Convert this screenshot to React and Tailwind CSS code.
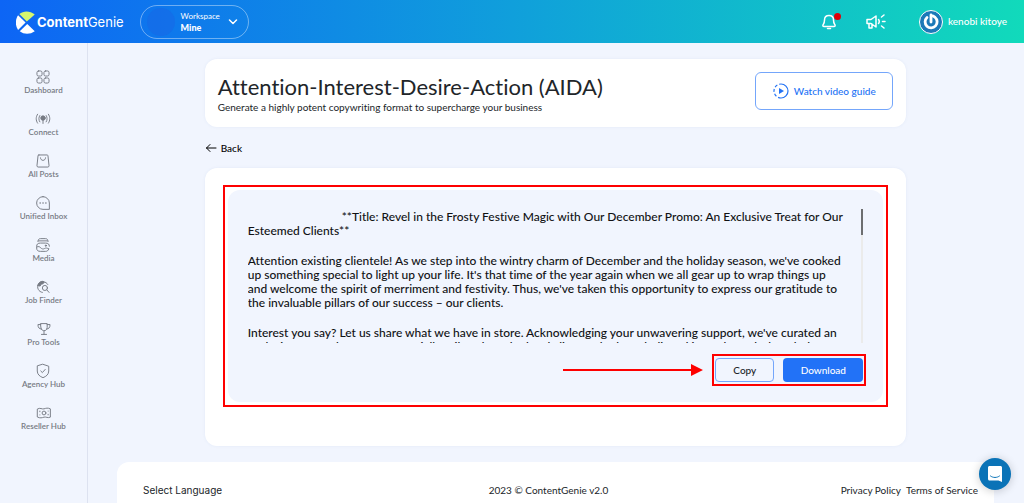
import React from 'react';

const stroke = { fill: 'none', stroke: 'currentColor', strokeWidth: 1.5, strokeLinecap: 'round', strokeLinejoin: 'round' };

const NAV_ITEMS = [
    {
        label: 'Dashboard',
        icon: (
            <g {...stroke}>
                <rect x="1.500" y="1.500" width="8" height="8" rx="2.500" />
                <rect x="12.500" y="1.500" width="8" height="8" rx="2.500" />
                <rect x="1.500" y="12.500" width="8" height="8" rx="2.500" />
                <rect x="12.500" y="12.500" width="8" height="8" rx="2.500" />
            </g>
        ),
    },
    {
        label: 'Connect',
        icon: (
            <g {...stroke}>
                <circle cx="11" cy="9.500" r="3.500" fill="currentColor" />
                <path d="M11 12v6M6 5.500c-2 3-2 7 0 10M16 5.500c2 3 2 7 0 10M2.500 3.500c-3 4.500-3 9.500 0 14M19.500 3.500c3 4.500 3 9.500 0 14" />
            </g>
        ),
    },
    {
        label: 'All Posts',
        icon: (
            <g {...stroke}>
                <path d="M4.500 1.500h13c.8 0 1.200.5 1.300 1.200l1.700 15.800c0 1.200-.8 2-1.800 2H3.300c-1 0-1.800-.8-1.800-2L3.200 2.700c.1-.7.5-1.200 1.300-1.200z" />
                <path d="M7 6c0 5.500 8 5.500 8 0" />
            </g>
        ),
    },
    {
        label: 'Unified Inbox',
        icon: (
            <g {...stroke}>
                <path d="M11 1a10 10 0 0 1 10 10v10H11a10 10 0 0 1 0-20z" />
                <path d="M6.500 11h.1M11 11h.1M15.500 11h.1" strokeWidth="2.4" />
            </g>
        ),
    },
    {
        label: 'Media',
        icon: (
            <g {...stroke}>
                <path d="M3 5.500c.3-3 1.500-4.500 4-4.500h8c2.500 0 3.700 1.500 4 4.500M4 4.500h14" />
                <path d="M20 17.500c-1 2.500-2.500 3.500-5 3.500H7c-4 0-6-1.500-6-5.500v-2C1 9.500 3 8 7 8h8c4 0 6 1.500 6 5" />
                <path d="M1.500 14c3-1.500 4.500 0 6 1.500s3.500 2.500 6 1 4-.5 6.500.5" />
                <circle cx="15.500" cy="12" r="1" fill="currentColor" />
            </g>
        ),
    },
    {
        label: 'Job Finder',
        icon: (
            <g {...stroke}>
                <path d="M18.500 7A8.500 8.500 0 1 0 10 19.500" />
                <path d="M3 8c1-4 4-6 8-6l2 1.500-2 2.500-3 .5-1.500 3L3 9z" fill="currentColor" />
                <circle cx="14" cy="12.500" r="4" />
                <path d="M17 15.500l3.500 4" />
            </g>
        ),
    },
    {
        label: 'Pro Tools',
        icon: (
            <g {...stroke}>
                <path d="M6 2.500h10v6c0 7-10 7-10 0zM6 4H1.500c0 5 2 7 5.500 7M16 4h4.500c0 5-2 7-5.500 7M11 14v5M7 19.500h8" />
            </g>
        ),
    },
    {
        label: 'Agency Hub',
        icon: (
            <g {...stroke}>
                <path d="M11 .5l9 3v7.500c0 5.500-4 8.500-9 10.500-5-2-9-5-9-10.500V3.500z" />
                <path d="M7.500 11l2.500 2.500 4.500-5" />
            </g>
        ),
    },
    {
        label: 'Reseller Hub',
        icon: (
            <g {...stroke}>
                <path d="M1 4.500c4-2.500 7 1 10 0s6-2 10 0v13c-4 2-7-1-10 0s-6 2-10 0z" />
                <circle cx="11" cy="11" r="3" />
                <path d="M4.500 8v1M17.500 13v1M4.500 14h.1M17.500 8h.1" />
            </g>
        ),
    },
];

const Logo = () => (
    <a href="#" className="flex items-center gap-px text-white">
        <svg viewBox="0 0 24 28" className="h-7 w-5" aria-hidden="true">
            <path d="M4 4.500C9 0 17 .3 22.500 5L13 13.500z" fill="#d5f76e" />
            <path d="M2.500 6L11.500 14.500l-9 9C-1 18.500-1 11 2.500 6z" fill="#fff" />
            <path d="M4.500 25L13.500 16.500l9 8.500c-5.500 4-13 4-18 0z" fill="#fff" />
        </svg>
        <span className="font-[Inter,sans-serif] text-[13px] leading-5"><b className="font-bold">Content</b>Genie</span>
    </a>
);

const Header = () => (
    <header className="flex h-[43px] shrink-0 items-center bg-linear-to-r/srgb from-[#0d65f5] via-[#109fdb] to-[#11dabb] pr-[17px] pl-4 text-white">
        <Logo />
        <button className="ml-4 flex h-[34px] w-[109px] items-center rounded-full border border-white/40 pr-2.5 pl-1.5 text-left">
            <span className="size-7 rounded-full bg-[#1866e6]/50" />
            <span className="ml-1.5 flex flex-col text-[8px] leading-[11px]">
                <span>Workspace</span>
                <b className="text-[9px] font-black">Mine</b>
            </span>
            <svg viewBox="0 0 10 6" className="ml-auto h-1.5 w-2.5" {...stroke}><path d="M1.500 1L5 4.500 8.500 1" /></svg>
        </button>
        <div className="ml-auto flex items-center">
            <button aria-label="Notifications" className="relative">
                <svg viewBox="0 0 16 16" className="size-4" {...stroke}>
                    <path d="M8 1.500c-3 0-4.500 2-4.500 4.500 0 3-1 4-1.500 5-.4 1 0 1.500 1 1.500h10c1 0 1.400-.5 1-1.500-.5-1-1.500-2-1.500-5 0-2.500-1.500-4.500-4.500-4.500z" />
                    <path d="M6.500 14.500h3" />
                </svg>
                <span className="absolute -top-px -right-1 size-[7px] rounded-full bg-[#e00008]" />
            </button>
            <button aria-label="Announcements" className="ml-7">
                <svg viewBox="0 0 22 18" className="h-[18px] w-[22px]" {...stroke}>
                    <path d="M2 6.500h4l5-3.500v11l-5-3.500H2zM4 10.500V15h3v-4M13.500 6.500c1 1 1 3 0 4M16.500 4l2.500-2M17.500 8.500H20M16.500 13l2.500 2" />
                </svg>
            </button>
            <a href="#" className="ml-8 flex items-center gap-[5px] text-[10px] font-medium">
                <svg viewBox="0 0 24 24" className="size-6" aria-hidden="true">
                    <circle cx="12" cy="12" r="11.500" fill="#1b79b8" stroke="#fff" />
                    <path d="M12 5v7M8 7.500a6 6 0 1 0 8-.2M12 5.700c1.500 0 3 .6 4 1.600" fill="none" stroke="#fff" strokeWidth="2.800" strokeLinecap="round" />
                </svg>
                kenobi kitoye
            </a>
        </div>
    </header>
);

const Sidebar = () => (
    <nav className="flex w-[88px] shrink-0 flex-col items-center gap-4 border-r border-[#dde2f0] pt-[27px] text-[#777b84]">
        {NAV_ITEMS.map(item => (
            <a key={item.label} href="#" className="flex flex-col items-center text-[8px] leading-3 font-semibold">
                <svg viewBox="0 0 22 22" className="size-3.5 overflow-visible" aria-hidden="true">{item.icon}</svg>
                {item.label}
            </a>
        ))}
    </nav>
);

const PageTitle = () => (
    <section className="flex items-start justify-between rounded-xl bg-white pt-[13px] pr-[13px] pb-3.5 pl-[13px] shadow-[0_0_3px_rgba(120,150,200,0.12)]">
        <div className="pt-px">
            <h1 className="text-[22px] leading-7">Attention-Interest-Desire-Action (AIDA)</h1>
            <p className="text-[10px] leading-3">Generate a highly potent copywriting format to supercharge your business</p>
        </div>
        <button className="flex h-[38px] w-[138px] items-center justify-center gap-[5px] rounded-md border border-[#74a6fb] text-[10px] font-medium text-[#2272f5]">
            <svg viewBox="0 0 16 16" className="size-4" aria-hidden="true">
                <path d="M8 1a7 7 0 0 1 0 14" fill="none" stroke="currentColor" strokeWidth="1.200" />
                <path d="M8 15A7 7 0 0 1 8 1" fill="none" stroke="currentColor" strokeWidth="1.200" strokeDasharray="3 2" />
                <path d="M6 5l5 3-5 3z" fill="currentColor" />
            </svg>
            Watch video guide
        </button>
    </section>
);

const Result = () => (
    <section className="rounded-xl bg-white px-[18px] pt-[17px] pb-[39px] shadow-[0_0_3px_rgba(120,150,200,0.12)]">
        <div className="border-2 border-[#fe0000] p-[3px]">
            <div className="rounded-xl bg-[#f1f5fe] px-5 pt-[19px] pb-4">
                <div className="flex h-[134px] justify-between overflow-hidden">
                    <div className="flex flex-col gap-4 pt-px text-[12px] leading-[14px] font-medium whitespace-pre text-[#101214]">
                        <p>
                            <span className="inline-block w-[94px]" />**Title: Revel in the Frosty Festive Magic with Our December Promo: An Exclusive Treat for Our<br />
                            Esteemed Clients**
                        </p>
                        <p>
                            Attention existing clientele! As we step into the wintry charm of December and the holiday season, we've cooked<br />
                            up something special to light up your life. It's that time of the year again when we all gear up to wrap things up<br />
                            and welcome the spirit of merriment and festivity. Thus, we've taken this opportunity to express our gratitude to<br />
                            the invaluable pillars of our success – our clients.
                        </p>
                        <p>
                            Interest you say? Let us share what we have in store. Acknowledging your unwavering support, we've curated an<br />
                            exclusive December promo, specially tailored for the loyal clients who have believed in us through the whole
                        </p>
                    </div>
                    <div className="w-0.5 shrink-0 bg-[#ebebeb]">
                        <div className="h-[26px] bg-[#6d6e70]" />
                    </div>
                </div>
                <div className="-mr-[3px] mt-[11px] flex items-center justify-end gap-[9px]">
                    <svg viewBox="0 0 140 12" className="h-3 w-[140px]" fill="#fe0000" aria-hidden="true">
                        <path d="M0 5h128V0l12 6-12 6V7H0z" />
                    </svg>
                    <div className="flex gap-[9px] border-2 border-[#fe0000] px-px py-[2px] text-[10px] font-medium">
                        <button className="h-6 w-[59px] rounded border border-[#74a6fb]">Copy</button>
                        <button className="h-6 w-20 rounded bg-[#2272f7] text-white">Download</button>
                    </div>
                </div>
            </div>
        </div>
    </section>
);

const Footer = () => (
    <footer className="mt-4 grid grid-cols-3 items-center rounded-xl bg-white py-5 pr-4 pl-[26px] text-[10px] leading-4">
        <span className="font-[Inter,sans-serif]">Select Language</span>
        <span className="pr-6 text-center">2023 © ContentGenie v2.0</span>
        <div className="flex justify-end gap-[5px]">
            <a href="#">Privacy Policy</a>
            <a href="#">Terms of Service</a>
        </div>
    </footer>
);

const App = () => (
    <div className="flex h-screen flex-col overflow-hidden bg-[#f1f5fe] font-[Lato,sans-serif] text-[#212529] [font-variant-ligatures:none]">
        <Header />
        <div className="flex min-h-0 grow">
            <Sidebar />
            <main className="grow overflow-y-auto pt-4 pr-[30px] pl-[29px] [scrollbar-width:none]">
                <div className="mx-auto w-4/5">
                    <PageTitle />
                    <a href="#" className="mt-[13px] mb-3 flex w-fit items-center gap-1 text-[10px] leading-4 font-medium text-black">
                        <svg viewBox="0 0 12 10" className="h-2.5 w-3" {...stroke} strokeWidth="1"><path d="M11 5H1.500M5 1.500L1.500 5 5 8.500" /></svg>
                        Back
                    </a>
                    <Result />
                </div>
                <Footer />
            </main>
        </div>
        <button aria-label="Open chat" className="fixed right-[13px] bottom-[13px] flex size-8 items-center justify-center rounded-full bg-[#0a73b7] shadow-[0_1px_10px_rgba(0,0,0,0.2)]">
            <svg viewBox="0 0 16 18" className="h-[18px] w-4" aria-hidden="true">
                <path d="M2.500 1h11c.8 0 1.500.7 1.500 1.500V17l-3.500-1.500h-9C1.700 15.500 1 14.800 1 14V2.500C1 1.700 1.700 1 2.500 1z" fill="#fff" />
                <path d="M3.500 11c2.500 2 6.500 2 9 0" fill="none" stroke="#0a73b7" strokeLinecap="round" />
            </svg>
        </button>
    </div>
);

export default App;
